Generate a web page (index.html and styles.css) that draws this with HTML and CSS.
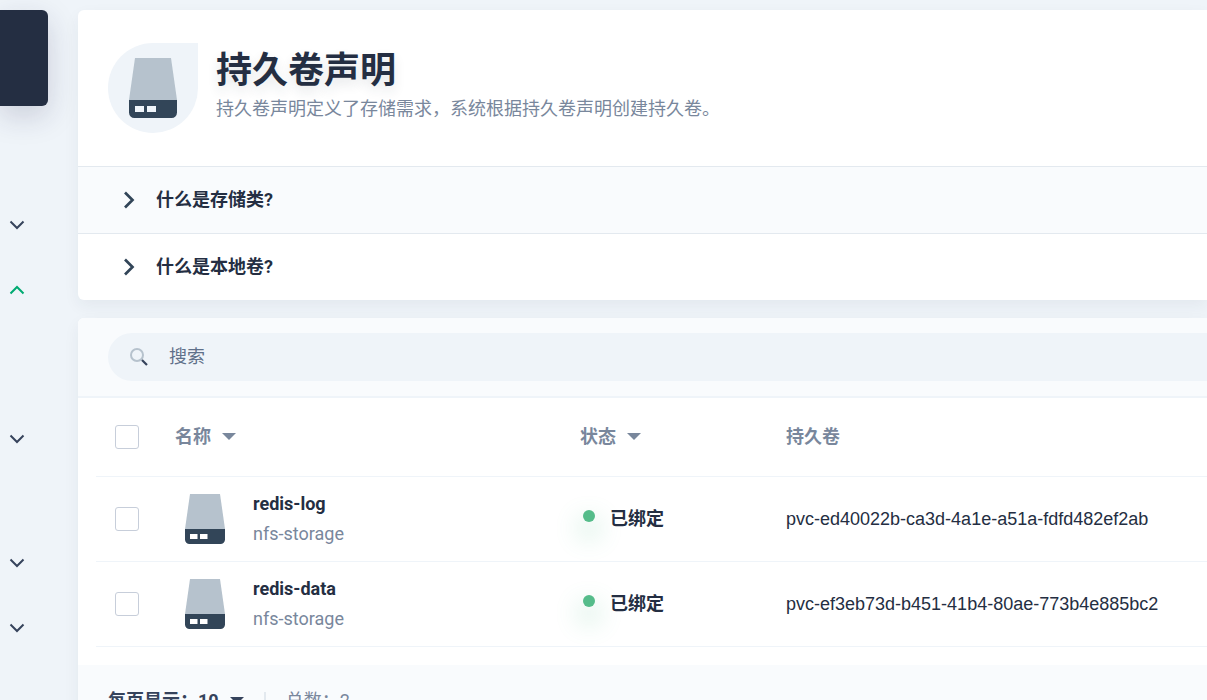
FILE: index.html
```html
<!DOCTYPE html>
<html lang="zh-CN">
<head>
<meta charset="utf-8">
<meta name="viewport" content="width=device-width, initial-scale=1">
<title>持久卷声明</title>
<link rel="stylesheet" href="styles.css">
</head>
<body>
<svg class="sprite" aria-hidden="true">
  <symbol id="storage" viewBox="0 0 16 20">
    <path fill="#b6c2cd" d="M2 0h12l2 14H0z"/>
    <path fill="#324558" fill-rule="evenodd" d="M0 14h16v4.200a1.800 1.800 0 0 1-1.800 1.800H1.800A1.800 1.800 0 0 1 0 18.200zM2 16v2h3v-2zM6 16v2h3v-2z"/>
  </symbol>
  <symbol id="down" viewBox="0 0 20 20">
    <path d="M3.500 6.500l6.500 6.500L16.500 6.500" fill="none" stroke="currentColor" stroke-width="2"/>
  </symbol>
  <symbol id="right" viewBox="0 0 20 20">
    <path d="M6 2.500l7.500 7.500L6 17.500" fill="none" stroke="currentColor" stroke-width="2.700"/>
  </symbol>
  <symbol id="caret" viewBox="0 0 14 7">
    <path d="M0 0h14L7 7z" fill="currentColor"/>
  </symbol>
</svg>
<div class="layout">
  <aside class="sidebar">
    <div class="workspace"></div>
    <nav class="menu" aria-label="导航">
      <button class="toggle" type="button" aria-expanded="false"><svg><use href="#down"/></svg></button>
      <button class="toggle open" type="button" aria-expanded="true"><svg><use href="#down"/></svg></button>
      <button class="toggle" type="button" aria-expanded="false"><svg><use href="#down"/></svg></button>
      <button class="toggle" type="button" aria-expanded="false"><svg><use href="#down"/></svg></button>
      <button class="toggle" type="button" aria-expanded="false"><svg><use href="#down"/></svg></button>
    </nav>
  </aside>
  <main class="content">
    <section class="card">
      <header class="banner">
        <div class="badge"><svg class="badge-icon"><use href="#storage"/></svg></div>
        <div>
          <h1 class="title">持久卷声明</h1>
          <p class="desc">持久卷声明定义了存储需求，系统根据持久卷声明创建持久卷。</p>
        </div>
      </header>
      <button class="tip tinted" type="button"><svg class="chevron"><use href="#right"/></svg>什么是存储类?</button>
      <button class="tip" type="button"><svg class="chevron"><use href="#right"/></svg>什么是本地卷?</button>
    </section>
    <section class="card">
      <div class="toolbar">
        <label class="search">
          <svg class="search-icon" viewBox="0 0 20 20"><circle cx="8" cy="8" r="6" fill="none" stroke="#b6c2cd" stroke-width="2"/><path d="M13 13l5 5" stroke="#36435c" stroke-width="2.200"/></svg>
          <input class="search-input" type="text" placeholder="搜索" aria-label="搜索">
        </label>
      </div>
      <div class="table-wrap">
        <table class="table">
          <thead>
            <tr>
              <th class="col-check"><input class="check" type="checkbox" aria-label="全选"></th>
              <th class="col-name"><button class="sort" type="button">名称<svg class="caret"><use href="#caret"/></svg></button></th>
              <th class="col-status"><button class="sort" type="button">状态<svg class="caret"><use href="#caret"/></svg></button></th>
              <th>持久卷</th>
            </tr>
          </thead>
          <tbody>
            <tr>
              <td class="col-check"><input class="check" type="checkbox" aria-label="redis-log"></td>
              <td><div class="claim"><svg class="claim-icon"><use href="#storage"/></svg><div><a class="claim-name" href="#">redis-log</a><p class="claim-class">nfs-storage</p></div></div></td>
              <td><div class="status"><i class="dot"></i>已绑定</div></td>
              <td class="volume">pvc-ed40022b-ca3d-4a1e-a51a-fdfd482ef2ab</td>
            </tr>
            <tr>
              <td class="col-check"><input class="check" type="checkbox" aria-label="redis-data"></td>
              <td><div class="claim"><svg class="claim-icon"><use href="#storage"/></svg><div><a class="claim-name" href="#">redis-data</a><p class="claim-class">nfs-storage</p></div></div></td>
              <td><div class="status"><i class="dot"></i>已绑定</div></td>
              <td class="volume">pvc-ef3eb73d-b451-41b4-80ae-773b4e885bc2</td>
            </tr>
          </tbody>
        </table>
      </div>
      <footer class="pager">
        <button class="page-size" type="button">每页显示：10<svg class="caret"><use href="#caret"/></svg></button>
        <span class="divider"></span>
        <span>总数：2</span>
      </footer>
    </section>
  </main>
</div>
</body>
</html>
```
FILE: styles.css
```css
* { box-sizing: border-box; }
body {
  margin: 0;
  height: 100vh;
  overflow: hidden;
  background: #eff4f9;
  color: #242e42;
  font-family: Roboto, "Noto Sans CJK SC", sans-serif;
  font-size: 18px;
  line-height: 30px;
}
h1, p { margin: 0; }
button {
  padding: 0;
  border: 0;
  background: none;
  color: inherit;
  font: inherit;
  font-weight: 700;
  text-align: left;
}
.sprite { position: absolute; width: 0; height: 0; }
.layout {
  display: grid;
  grid-template-columns: 48px minmax(0, 1fr);
  gap: 30px;
  padding-top: 10px;
}
.workspace {
  height: 96px;
  border-radius: 0 6px 6px 0;
  background: #242e42;
  box-shadow: 0 10px 30px rgba(35, 35, 75, .18);
}
.menu {
  display: grid;
  grid-template-rows: 65px 149px 124px 65px 20px;
  align-items: start;
  padding: 109px 0 0 7px;
}
.toggle { width: 20px; height: 20px; color: #36435c; }
.toggle svg { display: block; width: 20px; height: 20px; }
.toggle.open { color: #00aa72; }
.toggle.open svg { transform: rotate(180deg); }
.content { display: grid; gap: 18px; }
.card {
  border-radius: 6px 0 0 6px;
  background: #fff;
  box-shadow: 0 6px 16px rgba(36, 46, 66, .06);
}
.banner {
  display: flex;
  gap: 18px;
  padding: 33px 30px;
}
.badge {
  display: grid;
  place-items: center;
  flex: none;
  width: 90px;
  height: 90px;
  border-radius: 50% 0 50% 50%;
  background: #eff4f9;
}
.badge-icon { width: 48px; height: 60px; }
.title {
  font-size: 36px;
  line-height: 56px;
  text-shadow: 0 6px 12px rgba(36, 46, 66, .12);
}
.desc { line-height: 20px; color: #79879c; }
.tip {
  display: flex;
  align-items: center;
  gap: 17px;
  width: 100%;
  height: 67px;
  padding: 0 41px;
  border-top: 1px solid #e3e9ef;
}
.tinted { background: #f9fbfd; }
.chevron { width: 20px; height: 20px; color: #324558; }
.toolbar {
  padding: 15px 0 15px 30px;
  border-bottom: 2px solid #eff4f9;
  border-radius: 6px 0 0 0;
  background: #f9fbfd;
}
.search {
  display: flex;
  align-items: center;
  gap: 20px;
  height: 48px;
  padding-left: 21px;
  border-radius: 24px 0 0 24px;
  background: #eff4f9;
}
.search-icon { width: 20px; height: 20px; }
.search-input {
  flex: 1;
  min-width: 0;
  padding: 0;
  border: 0;
  outline: 0;
  background: none;
  color: inherit;
  font: inherit;
}
.search-input::placeholder { color: #5f708a; }
.table-wrap { padding: 0 0 18px 18px; }
.table {
  width: 100%;
  border-collapse: collapse;
  table-layout: fixed;
}
th, td {
  padding: 0;
  border-bottom: 1px solid #eff4f9;
  text-align: left;
}
th { height: 78px; color: #79879c; }
td { height: 85px; }
.col-check { width: 79px; padding-left: 19px; }
.col-name { width: 405px; }
.col-status { width: 206px; }
.check {
  display: block;
  appearance: none;
  width: 24px;
  height: 24px;
  margin: 0;
  border: 1px solid #c7ceda;
  border-radius: 3px;
  background: #fff;
}
.sort, .page-size {
  display: flex;
  align-items: center;
  gap: 11px;
}
.caret { width: 14px; height: 7px; }
.claim {
  display: flex;
  align-items: center;
  gap: 28px;
  padding-left: 10px;
}
.claim-icon { width: 40px; height: 50px; }
.claim-name { color: inherit; font-weight: 700; text-decoration: none; }
.claim-class { color: #79879c; }
.status {
  display: flex;
  align-items: center;
  gap: 15px;
  padding-left: 3px;
  font-weight: 700;
}
.dot {
  width: 12px;
  height: 12px;
  margin-bottom: 6px;
  border-radius: 50%;
  background: #55bc8a;
  box-shadow: 0 12px 24px 6px rgba(85, 188, 138, .2);
}
.volume { font-family: "Liberation Sans", Arial, sans-serif; }
.pager {
  display: flex;
  align-items: center;
  gap: 20px;
  padding: 21px 30px;
  background: #f9fbfd;
  color: #79879c;
}
.page-size { color: #36435c; }
.divider { width: 2px; height: 18px; background: #e3e9ef; }
```
